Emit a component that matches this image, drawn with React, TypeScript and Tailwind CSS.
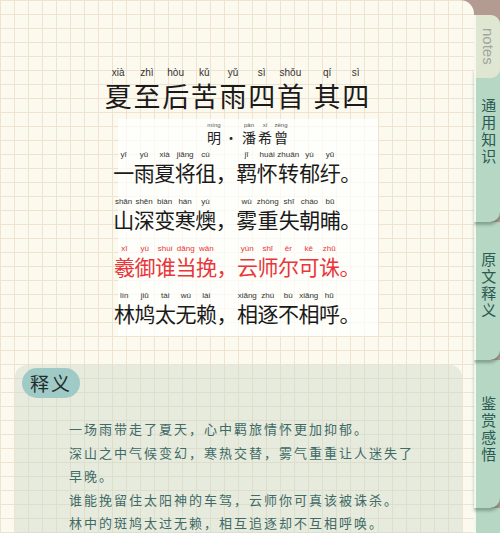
import React from 'react';

type Item = [string, string];

const title: Item[] = [
  ['夏', 'xià'], ['至', 'zhì'], ['后', 'hòu'], ['苦', 'kǔ'], ['雨', 'yǔ'], ['四', 'sì'], ['首', 'shǒu'],
  [' ', ''], ['其', 'qí'], ['四', 'sì'],
];

const poem: { items: Item[]; red?: boolean }[] = [
  { items: [['一', 'yī'], ['雨', 'yǔ'], ['夏', 'xià'], ['将', 'jiāng'], ['徂', 'cú'], ['，', ''], ['羁', 'jī'], ['怀', 'huái'], ['转', 'zhuǎn'], ['郁', 'yù'], ['纡', 'yū'], ['。', '']] },
  { items: [['山', 'shān'], ['深', 'shēn'], ['变', 'biàn'], ['寒', 'hán'], ['燠', 'yù'], ['，', ''], ['雾', 'wù'], ['重', 'zhòng'], ['失', 'shī'], ['朝', 'cháo'], ['晡', 'bū'], ['。', '']] },
  { red: true, items: [['羲', 'xī'], ['御', 'yù'], ['谁', 'shuí'], ['当', 'dāng'], ['挽', 'wǎn'], ['，', ''], ['云', 'yún'], ['师', 'shī'], ['尔', 'ěr'], ['可', 'kě'], ['诛', 'zhū'], ['。', '']] },
  { items: [['林', 'lín'], ['鸠', 'jiū'], ['太', 'tài'], ['无', 'wú'], ['赖', 'lài'], ['，', ''], ['相', 'xiāng'], ['逐', 'zhú'], ['不', 'bù'], ['相', 'xiāng'], ['呼', 'hū'], ['。', '']] },
];

const meaning = [
  '一场雨带走了夏天，心中羁旅情怀更加抑郁。',
  '深山之中气候变幻，寒热交替，雾气重重让人迷失了早晚。',
  '谁能挽留住太阳神的车驾，云师你可真该被诛杀。',
  '林中的斑鸠太过无赖，相互追逐却不互相呼唤。',
];

const cjk = { fontFamily: '"Noto Sans CJK SC", sans-serif' };
const latin = { fontFamily: '"Liberation Sans", Arial, sans-serif' };

function Ruby({ c, p, pinyinClass, charClass }: { c: string; p: string; pinyinClass: string; charClass: string }) {
  return (
    <span className="inline-flex flex-col items-center">
      <span className={pinyinClass} style={latin}>{p || '\u00a0'}</span>
      <span className={charClass} style={cjk}>{c === ' ' ? '\u00a0' : c}</span>
    </span>
  );
}

export default function App() {
  return (
    <div className="w-[500px] h-[533px] overflow-hidden flex bg-[#b39b92]">
      {/* Page */}
      <div className="w-[474px] h-full rounded-tr-[14px] bg-[#fcf9ee] bg-[linear-gradient(to_right,#eee2d1_1px,transparent_1px),linear-gradient(to_bottom,#eee2d1_1px,transparent_1px)] bg-[size:14px_14px] flex flex-col items-center pt-[67px]">
        {/* Title */}
        <div className="flex">
          {title.map(([c, p], i) => (
            <Ruby
              key={i}
              c={c}
              p={p}
              pinyinClass="text-[10px] leading-[12px] text-[#333] mb-[2px]"
              charClass={`text-[27px] leading-[29px] text-[#1a1a1a] ${c === ' ' ? 'w-[8px]' : 'w-[28.7px] text-center'}`}
            />
          ))}
        </div>

        {/* Poem box */}
        <div className="mt-[9px] w-[260px] ml-[22px] bg-[rgba(255,255,253,0.75)] pt-[2px] pb-[12px] flex flex-col items-center">
          <div className="flex items-end">
            <Ruby c="明" p="míng" pinyinClass="text-[6px] leading-[8px] text-[#555]" charClass="text-[14px] leading-[16px] text-[#222]" />
            <span className="text-[14px] leading-[16px] text-[#222] px-[3px]" style={cjk}>·</span>
            <Ruby c="潘" p="pān" pinyinClass="text-[6px] leading-[8px] text-[#555]" charClass="text-[14px] leading-[16px] text-[#222] w-[16px] text-center" />
            <Ruby c="希" p="xī" pinyinClass="text-[6px] leading-[8px] text-[#555]" charClass="text-[14px] leading-[16px] text-[#222] w-[16px] text-center" />
            <Ruby c="曾" p="zēng" pinyinClass="text-[6px] leading-[8px] text-[#555]" charClass="text-[14px] leading-[16px] text-[#222] w-[16px] text-center" />
          </div>
          <div className="-ml-[22px] w-[270px] flex flex-col items-center gap-[14px] pt-[5px]">
            {poem.map((line, li) => (
              <div key={li} className="flex">
                {line.items.map(([c, p], i) => (
                  <Ruby
                    key={i}
                    c={c}
                    p={p}
                    pinyinClass={`text-[8px] leading-[10px] mb-[1px] whitespace-nowrap ${line.red ? 'text-[#e8363a]' : 'text-[#333]'}`}
                    charClass={`text-[21px] leading-[22px] w-[20.5px] text-center ${line.red ? 'text-[#e8363a]' : 'text-[#1a1a1a]'}`}
                  />
                ))}
              </div>
            ))}
          </div>
        </div>

        {/* Meaning panel */}
        <div className="mt-[29px] self-start ml-[15px] w-[447px] flex-1 rounded-t-[12px] bg-[rgba(200,218,200,0.42)] pt-[3px] pl-[7px]">
          <div className="w-[58px] h-[30px] rounded-full bg-[#a0cac6] flex items-center justify-center text-[19px] text-[#1f2e2c] tracking-[2px]" style={cjk}>
            释义
          </div>
          <div className="mt-[19px] ml-[47px] w-[352px] text-[13px] leading-[23.5px] tracking-[2px] text-[#3f6a66]" style={cjk}>
            {meaning.map((m, i) => (
              <p key={i}>{m}</p>
            ))}
          </div>
        </div>
      </div>

      {/* Tabs */}
      <div className="w-[26px] h-full flex flex-col pt-[15px]">
        <div className="relative z-50 h-[63px] w-full rounded-r-[9px] bg-[#dfe6d2] border-l-2 border-[#f6f8ef] flex items-center justify-center">
          <span className="[writing-mode:vertical-rl] text-[15px] text-[#9ea69d]" style={latin}>notes</span>
        </div>
        <div className="relative z-40 -mt-[10px] pt-[10px] h-[154px] rounded-br-[10px] bg-[#b5d7c3] border-l-2 border-[#f3f7ee] shadow-[0_3px_3px_rgba(40,70,50,0.35)] flex flex-col items-center">
          <span className="mt-[20px] [writing-mode:vertical-rl] text-[15px] tracking-[2px] text-[#2b5a52]" style={cjk}>通用知识</span>
        </div>
        <div className="relative z-30 h-[138px] rounded-br-[10px] bg-[#b5d7c3] border-l-2 border-[#f3f7ee] shadow-[0_3px_3px_rgba(40,70,50,0.35)] flex flex-col items-center">
          <span className="mt-[30px] [writing-mode:vertical-rl] text-[15px] tracking-[2px] text-[#2b5a52]" style={cjk}>原文释义</span>
        </div>
        <div className="relative z-20 h-[148px] rounded-br-[10px] bg-[#b5d7c3] border-l-2 border-[#f3f7ee] shadow-[0_3px_3px_rgba(40,70,50,0.35)] flex flex-col items-center">
          <span className="mt-[36px] [writing-mode:vertical-rl] text-[15px] tracking-[2px] text-[#2b5a52]" style={cjk}>鉴赏感悟</span>
        </div>
        <div className="relative z-10 flex-1 bg-[#b5d7c3] border-l-2 border-[#f3f7ee]" />
      </div>
    </div>
  );
}
